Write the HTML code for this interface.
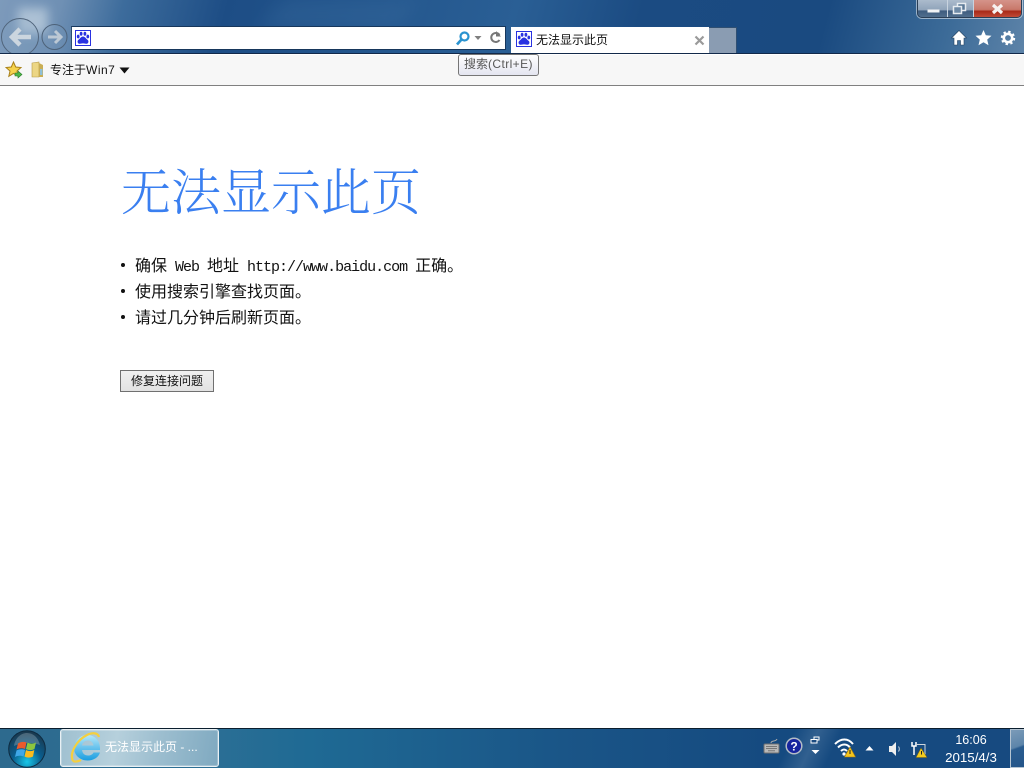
<!DOCTYPE html>
<html lang="zh"><head><meta charset="utf-8"><title>无法显示此页</title>
<style>
*{box-sizing:border-box}
html,body{margin:0;padding:0;width:1024px;height:768px;overflow:hidden;background:#fff;font-family:"Liberation Sans","Noto Sans CJK SC",sans-serif}
.a{position:absolute;white-space:nowrap}
#chrome{left:0;top:0;width:1024px;height:54px;background:linear-gradient(105deg,#7d9abb 0,#6f90b4 6%,#3d6c9c 12%,#1d4d85 22%,#24578e 38%,#2a5f95 50%,#1b4b82 62%,#1a4a80 80%,#3c6b98 92%,#5d83a8 100%)}
.s{font-family:"Noto Serif CJK SC","Liberation Serif",serif}
.li{left:135px;font-size:16px;line-height:20px;color:#111;font-family:"WenQuanYi Zen Hei","Noto Sans CJK SC",sans-serif}
.li i{font-style:normal;font-family:"Liberation Mono",monospace;font-size:15px;letter-spacing:-1px;white-space:pre}
.dot{left:121px;width:4px;height:4px;border-radius:50%;background:#111}
#task{left:0;top:728px;width:1024px;height:40px;background:linear-gradient(90deg,#2d6a8e 0,#2c6f95 20%,#1f6a94 30%,#1a5587 55%,#154a80 75%,#174a80 100%);border-top:1px solid #0b1e2e}
.w{left:0;top:0;height:21px;background:linear-gradient(#b4c2d2 0,#8fa3b9 62%,#3e5c7f 66%,#54718f 100%)}
</style></head><body>
<div id="chrome" class="a">
<div class="a" style="left:18px;top:8px;width:30px;height:26px;background:#c4d4e2;opacity:.7;filter:blur(5px)"></div>
<div class="a" style="left:270px;top:0;width:140px;height:30px;background:#3b6d9f;opacity:.35;filter:blur(10px);transform:skewX(-30deg)"></div>
</div>
<svg class="a" style="left:0;top:17px" width="72" height="37" viewBox="0 0 72 37">
<circle cx="20" cy="20" r="18.500" fill="#8ea8c2" fill-opacity=".2" stroke="#51657c"/>
<circle cx="54.500" cy="20" r="12.500" fill="#7d9ab8" fill-opacity=".2" stroke="#4d6279"/>
<path d="M20 12l-8 8 8 8M12 20h19" fill="none" stroke="#ccd6df" stroke-width="4.500"/>
<path d="M55 14l6 6-6 6M48 20h12" fill="none" stroke="#bcc8d4" stroke-width="3"/>
</svg>
<div class="a" style="left:71px;top:26px;width:435px;height:24px;background:#fff;border:1px solid #17375c;border-left-color:#2c4d70"></div>
<svg class="a" style="left:75px;top:30px" width="16" height="16" viewBox="0 0 16 16"><rect x=".5" y=".5" width="15" height="15" fill="#fff" stroke="#2932e1"/><path d="M8 6.500c-2 0-2.800 2-4.500 3.200C1.800 11 2.500 14 5 13.800c1.200-.1 2-.4 3-.4s1.800.3 3 .4c2.500.2 3.200-2.800 1.500-4.100C10.800 8.500 10 6.500 8 6.500z" fill="#2932e1"/><ellipse cx="3.200" cy="6.500" rx="1.400" ry="1.900" fill="#2932e1"/><ellipse cx="6.100" cy="3.800" rx="1.400" ry="2" fill="#2932e1"/><ellipse cx="9.900" cy="3.800" rx="1.400" ry="2" fill="#2932e1"/><ellipse cx="12.800" cy="6.500" rx="1.400" ry="1.900" fill="#2932e1"/></svg>
<svg class="a" style="left:455px;top:30px" width="50" height="16" viewBox="0 0 50 16">
<circle cx="9.500" cy="6.500" r="4" fill="none" stroke="#2a93d0" stroke-width="2.200"/><path d="M6.500 9.500l-4.500 5" stroke="#2a93d0" stroke-width="2.700"/>
<path d="M19.500 6h7l-3.500 4z" fill="#808080"/>
<path d="M44.500 5A4.500 4.500 0 1 0 44.500 10" fill="none" stroke="#777" stroke-width="2"/><path d="M41 1v5.500h5z" fill="#777"/>
</svg>
<div class="a" style="left:511px;top:27px;width:198px;height:27px;background:#fff"></div>
<div class="a" style="left:709px;top:27px;width:28px;height:27px;background:#8a9cb2;border:1px solid #2f4f72;border-bottom:0;border-left:0"></div>
<svg class="a" style="left:516px;top:31px" width="16" height="16" viewBox="0 0 16 16"><rect x=".5" y=".5" width="15" height="15" fill="#fff" stroke="#2932e1"/><path d="M8 6.500c-2 0-2.800 2-4.500 3.200C1.800 11 2.500 14 5 13.800c1.200-.1 2-.4 3-.4s1.800.3 3 .4c2.500.2 3.200-2.800 1.500-4.100C10.800 8.500 10 6.500 8 6.500z" fill="#2932e1"/><ellipse cx="3.200" cy="6.500" rx="1.400" ry="1.900" fill="#2932e1"/><ellipse cx="6.100" cy="3.800" rx="1.400" ry="2" fill="#2932e1"/><ellipse cx="9.900" cy="3.800" rx="1.400" ry="2" fill="#2932e1"/><ellipse cx="12.800" cy="6.500" rx="1.400" ry="1.900" fill="#2932e1"/></svg>
<div class="a" style="left:536px;top:32px;font-size:12px;line-height:17px;color:#111">无法显示此页</div>
<svg class="a" style="left:694px;top:35px" width="11" height="11" viewBox="0 0 11 11"><path d="M1.500 1.500l8 8M9.500 1.500l-8 8" stroke="#9a9a9a" stroke-width="2.200"/></svg>

<div class="a" style="left:917px;top:-4px;width:105px;height:22px;border:1px solid #2a3e55;border-radius:0 0 5px 5px;box-shadow:0 0 0 1px rgba(255,255,255,.5);overflow:hidden">
<div class="a w" style="width:29px"></div>
<div class="a w" style="left:29px;width:27px;border-left:1px solid #c8d3df;border-right:1px solid #c8d3df"></div>
<div class="a" style="left:56px;top:0;width:48px;height:21px;background:linear-gradient(#d99c94 0,#c8786a 60%,#a92a18 68%,#c4503c 100%)"></div>
</div>
<svg class="a" style="left:920px;top:0" width="90" height="16" viewBox="0 0 90 16">
<rect x="7.500" y="9.500" width="12" height="3" fill="#f2f4f6"/>
<rect x="37.500" y="3.500" width="8" height="7" fill="#5a7896" stroke="#e6ebf0" stroke-width="1.500"/>
<rect x="33.500" y="6.500" width="8" height="7" fill="#6e8aa6" stroke="#e6ebf0" stroke-width="1.500"/>
<path d="M73 5l9 8M82 5l-9 8" stroke="#f7f2f0" stroke-width="3.200"/>
</svg>
<svg class="a" style="left:950px;top:29px" width="68" height="19" viewBox="0 0 68 19">
<path d="M9 1.500L1.500 9H4v7h3.500v-4.500h3V16H14V9h2.500z" fill="#fff" stroke="#23415f" stroke-width=".6"/>
<path d="M33.500 1l2.300 5.200 5.700.6-4.300 3.800 1.300 5.600-5-2.900-5 2.900 1.300-5.600-4.300-3.800 5.700-.6z" fill="#fff"/>
<circle cx="58" cy="9" r="4.200" fill="none" stroke="#fff" stroke-width="2.600"/><circle cx="58" cy="9" r="6.200" fill="none" stroke="#fff" stroke-width="2" stroke-dasharray="2.400 2.470"/>
</svg>
<div class="a" style="left:0;top:53px;width:1024px;height:1px;background:#12294a"></div>

<div class="a" style="left:0;top:54px;width:1024px;height:32px;background:#f7f7f7;border-bottom:1px solid #808080;border-top:1px solid #fff"></div>
<svg class="a" style="left:5px;top:61px" width="18" height="18" viewBox="0 0 18 18"><path d="M8.500 1l2.200 5 5.300.5-4 3.500 1.200 5.300-4.700-2.800-4.700 2.800L5 10 1 6.500 6.300 6z" fill="#f6d34e" stroke="#a8801a"/><path d="M10 12h3v-2l4 3.500-4 3.500v-2h-3z" fill="#4cb748" stroke="#2d7d2b" stroke-width=".6"/></svg>
<svg class="a" style="left:31px;top:61px" width="13" height="17" viewBox="0 0 13 17"><path d="M1 2l7-1v15H1z" fill="#ecd684" stroke="#b69a45" stroke-width=".6"/><path d="M8 2l4 2v12H8z" fill="#c9ae55"/><path d="M9 8h2.500v6H9z" fill="#8fc0d8"/></svg>
<div class="a" style="left:50px;top:62px;font-size:12px;line-height:17px;color:#111">专注于<span style="letter-spacing:.5px">Win7</span></div>
<svg class="a" style="left:119px;top:67px" width="11" height="7" viewBox="0 0 11 7"><path d="M.5.500h10L5.500 6.500z" fill="#111"/></svg>

<div class="a" style="left:458px;top:54px;width:81px;height:22px;border:1px solid #767676;border-radius:3px;background:linear-gradient(#fff,#e4e5f0);font-size:12px;line-height:19px;color:#575757;padding-left:5px">搜索<span style="letter-spacing:.4px">(Ctrl+E)</span></div>

<div class="a s" style="left:121px;top:155px;font-size:50px;line-height:68px;color:#3a7ff0;font-weight:300">无法显示此页</div>
<div class="a dot" style="top:263px"></div>
<div class="a li" style="top:254px">确保<i> Web </i>地址<i> http://www.baidu.com </i>正确。</div>
<div class="a dot" style="top:289px"></div>
<div class="a li" style="top:280px">使用搜索引擎查找页面。</div>
<div class="a dot" style="top:315px"></div>
<div class="a li" style="top:306px">请过几分钟后刷新页面。</div>
<div class="a" style="left:120px;top:370px;width:94px;height:22px;background:linear-gradient(#f0f0f0,#e2e2e2);border:1px solid #707070;font-size:12px;line-height:21px;text-align:center;color:#111">修复连接问题</div>

<div id="task" class="a"></div>
<div class="a" style="left:760px;top:729px;width:100px;height:39px;background:linear-gradient(115deg,transparent 30%,rgba(255,255,255,.12) 50%,transparent 70%)"></div>
<svg class="a" style="left:8px;top:730px" width="38" height="38" viewBox="0 0 38 38">
<defs><radialGradient id="o" cx=".5" cy=".85" r=".8"><stop offset="0" stop-color="#18c7e8"/><stop offset=".5" stop-color="#0a5c8c"/><stop offset="1" stop-color="#1a3a50"/></radialGradient></defs>
<circle cx="19" cy="19" r="18.300" fill="url(#o)" stroke="#0d2a40"/>
<path d="M6 16C7 8 13 3 19 3s11 4 13 12c-8-3-18-3-26 1z" fill="#fff" fill-opacity=".22"/>
<path d="M10 13.500c3-2 6-2 8.500-1l-1.500 6.500c-3-1-5-1-8.500.5z" fill="#ea5a2c"/>
<path d="M19.500 12.500c3 1.500 6 1.500 8.500 0L26.500 19c-3 1.500-5.500 1.500-8.500 0z" fill="#8cc63f"/>
<path d="M8.500 20.500c3-1.500 5.500-1.500 8.500-.5l-1.500 6.500c-3-1-5.500-1-8.500.5z" fill="#3fa7e8"/>
<path d="M18 20c3 1.500 5.500 1.500 8.300 0L25 26.500c-3 1.500-5.500 1.500-8.500 0z" fill="#fbbb1d"/>
</svg>
<div class="a" style="left:60px;top:729px;width:159px;height:38px;border:1px solid #e8f0f4;border-radius:3px;background:linear-gradient(100deg,#9fc0d0 0,#b6d0dc 35%,#9ebfd0 60%,#7fa9c0 100%);box-shadow:inset 0 0 0 1px rgba(255,255,255,.25)"></div>
<svg class="a" style="left:69px;top:731px" width="34" height="34" viewBox="0 0 34 34">
<defs><linearGradient id="e" x1="0" y1="0" x2="0" y2="1"><stop offset="0" stop-color="#b5e8fa"/><stop offset="1" stop-color="#1a9de0"/></linearGradient></defs>
<path d="M18 4c7.500 0 13 5.500 13 13v2H13c.5 3.500 2.500 5.500 6 5.500 2.500 0 4.500-1 5.500-3H31c-1.500 5-6.500 8-12.500 8C11 29.500 5 24 5 17S11 4 18 4zm-5 10.500h11.500c-.5-3-2.500-5-5.500-5s-5.500 2-6 5z" fill="url(#e)" fill-rule="evenodd"/>
<path d="M4 30C0 22 8 9 18 4c6-3 11-2 12 2M4 30c2 1 5 .5 8-1" fill="none" stroke="#f5cf3f" stroke-width="2.200"/>
</svg>
<div class="a" style="left:105px;top:739px;font-size:12px;line-height:17px;color:#fff">无法显示此页 - ...</div>

<svg class="a" style="left:763px;top:738px" width="17" height="16" viewBox="0 0 17 16"><path d="M8 5c0-3 5-1 6-4" fill="none" stroke="#aaa"/><rect x="1" y="6" width="15" height="9" rx="1" fill="#b9b9b9" stroke="#6f6f6f"/><path d="M3 8.500h11M3 10.500h11M5 12.800h7" stroke="#777"/></svg>
<svg class="a" style="left:785px;top:737px" width="18" height="18" viewBox="0 0 18 18"><circle cx="9" cy="9" r="7.800" fill="#16249e" stroke="#b4bcc6" stroke-width="1.500"/><text x="9" y="13.500" text-anchor="middle" font-size="12" font-weight="bold" font-family="Liberation Sans" fill="#fff">?</text></svg>
<svg class="a" style="left:810px;top:736px" width="11" height="20" viewBox="0 0 11 20"><rect x="4" y="1" width="5" height="3" fill="none" stroke="#fff"/><rect x="1" y="3.500" width="6" height="3.500" fill="#1a4a80" stroke="#fff"/><path d="M1.500 14h8L5.500 18z" fill="#fff"/></svg>
<svg class="a" style="left:834px;top:738px" width="22" height="20" viewBox="0 0 22 20"><path d="M1 6c6-6 13-6 18 0M4 9.500c4-4 9-4 12 0M7 13c2-2 4-2 6 0" fill="none" stroke="#fff" stroke-width="2"/><circle cx="10" cy="16" r="1.600" fill="#fff"/><path d="M16 9l5.500 10h-11z" fill="#f6c51c" stroke="#a67a0e" stroke-width=".6"/><path d="M16 12v4" stroke="#222"/></svg>
<svg class="a" style="left:865px;top:745px" width="9" height="6" viewBox="0 0 9 6"><path d="M.5 5.500h8L4.500 1z" fill="#fff"/></svg>
<svg class="a" style="left:888px;top:741px" width="14" height="16" viewBox="0 0 14 16"><path d="M1 5h3l4-4v14l-4-4H1z" fill="#eee"/><path d="M10.500 5.500c1 1.500 1 3.500 0 5" fill="none" stroke="#c8d5e0"/></svg>
<svg class="a" style="left:911px;top:741px" width="17" height="17" viewBox="0 0 17 17"><path d="M1 1v4h4V1M3 5v9" fill="none" stroke="#fff" stroke-width="1.500"/><path d="M5 3.500h9V14" fill="none" stroke="#cfd6dd"/><path d="M10 7l6 9.500H5z" fill="#f2cb1f" stroke="#7a6110" stroke-width=".5"/><path d="M10.500 10v3.500" stroke="#222"/></svg>
<div class="a" style="left:941px;top:731px;width:60px;text-align:center;font-size:12.5px;line-height:18px;color:#fff">16:06</div>
<div class="a" style="left:941px;top:749px;width:60px;text-align:center;font-size:13.300px;line-height:18px;color:#fff">2015/4/3</div>
<div class="a" style="left:1010px;top:729px;width:14px;height:39px;border:1px solid #b4c4d2;border-right:0;background:linear-gradient(160deg,#7b9bb8 0,#5d85aa 45%,#2a5c8f 50%,#24558a 100%)"></div>
</body></html>
